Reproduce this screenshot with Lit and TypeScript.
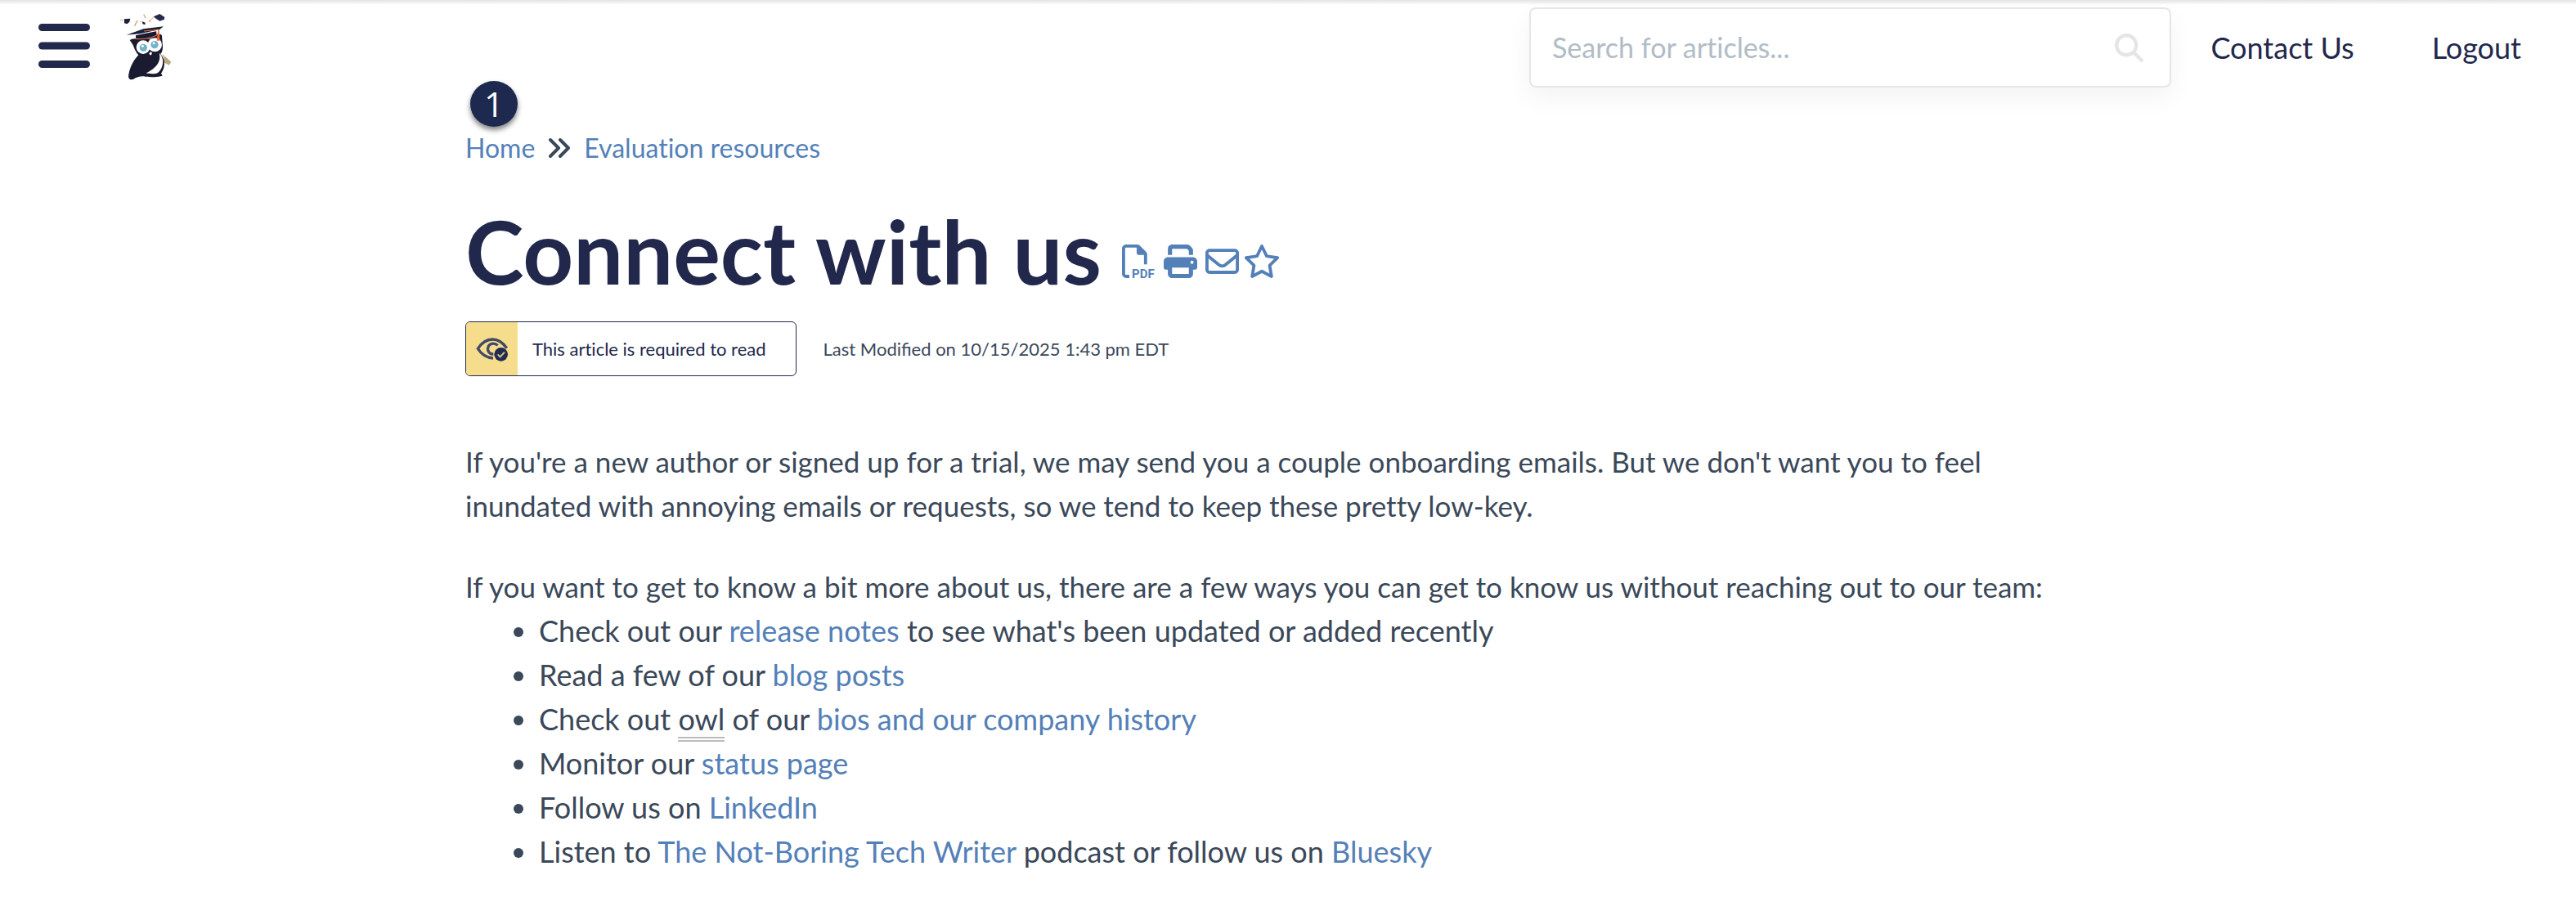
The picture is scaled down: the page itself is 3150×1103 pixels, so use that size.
import { LitElement, html, css, svg } from "lit";
import { customElement } from "lit/decorators.js";

const owl = html`
  <svg class="owl" viewBox="0 8 240 270" aria-hidden="true">
    <!-- tossed caps and scrolls -->
    <path d="M20 49h18" stroke="#ee9a78" stroke-width="2.5" />
    <path d="M36 45l22-2-3 12-9 8-10-3z" fill="#1c2038" />
    <path d="M84 50l-10 20" stroke="#c5b48c" stroke-width="5" />
    <path d="M107 28l8 14" stroke="#c5b48c" stroke-width="4" />
    <path d="M102 54l11 4-1 8-9-3z" fill="#1c2038" />
    <path d="M94 55h8" stroke="#ee9a78" stroke-width="2" />
    <path d="M143 36l23-10 18 12-2 9-16 5-14-9z" fill="#232a4a" />
    <path d="M145 36l-16 16" stroke="#f0845a" stroke-width="2.5" />
    <circle cx="129" cy="52" r="3" fill="#f0845a" />
    <!-- diploma under the wing -->
    <path d="M178 175l30 27-8 12-26-14z" fill="#b9a982" />
    <path d="M176 174l8 4-4 20-8-8z" fill="#ded3b3" />
    <!-- body -->
    <path d="M64 118c6 6 12 2 24 0h60l13-15c6-3 12-2 13 3l3 40c0 12-2 20-8 27 10 12 15 25 14 39-1 14-7 26-12 32l5 9c-24 6-52 6-68 2-15-1-28 4-38 10-14 6-21-2-18-17 5-28 18-52 36-71-15-18-21-38-24-59z" fill="#1a1a30" />
    <path d="M164 169c14 14 17 34 10 51-4 12-13 22-20 24-14 3-28 2-38-1 30-15 58-38 48-74z" fill="#fff" />
    <path d="M56 122l8-4 18-2 4 18-14 12z" fill="#1a1a30" />
    <circle cx="105" cy="148" r="25" fill="#fff" />
    <circle cx="148" cy="139" r="26" fill="#fff" />
    <circle cx="106" cy="150" r="14" fill="#73b3cc" />
    <circle cx="147" cy="139" r="14" fill="#73b3cc" />
    <circle cx="103" cy="144" r="4.5" fill="#fff" />
    <circle cx="144" cy="133" r="4.5" fill="#fff" />
    <path d="M127 171l5-6 6 4-3 8h-5z" fill="#fff" />
    <!-- mortarboard -->
    <path d="M78 105l82-17 2 24-60 9-24-2z" fill="#171b33" />
    <path d="M76 117c30 4 56-2 80-13" fill="none" stroke="#ef6a35" stroke-width="3.5" />
    <path d="M44 103l62-22 74-9-14 11-72 16z" fill="#1b203a" />
    <path d="M108 89l54-5" stroke="#ef6a35" stroke-width="3" />
    <path d="M153 86l7-2 1 12-6 8z" fill="#fff" />
    <path d="M160 84h4l2 40h-11z" fill="#ef6a35" />
  </svg>
`;

const eye = html`
  <svg class="eye" viewBox="0 0 120 90" aria-hidden="true">
    <path d="M113 41C98 20 80 9 61 9 38 9 19 24 7 43c12 19 30 33 56 35" fill="none" stroke="#434966" stroke-width="10" />
    <path d="M80 31C70 21 52 22 46 34c-7 15 2 30 18 29" fill="none" stroke="#434966" stroke-width="10" />
    <circle cx="92" cy="64" r="25" fill="#222a52" />
    <path d="M80 64l9 9 16-17" fill="none" stroke="#d8c584" stroke-width="6" />
  </svg>
`;

const filePdf = html`
  <svg class="icon" viewBox="0 0 41 41" aria-hidden="true">
    <g transform="scale(0.08)">
      <path d="M64 464l48 0 0 48-48 0c-35.3 0-64-28.7-64-64L0 64C0 28.7 28.7 0 64 0L229.5 0c17 0 33.3 6.7 45.3 18.7l90.5 90.5c12 12 18.7 28.3 18.7 45.3L384 304l-48 0 0-144-80 0c-17.7 0-32-14.3-32-32l0-80L64 48c-8.8 0-16 7.2-16 16l0 384c0 8.8 7.2 16 16 16z" />
    </g>
    <text class="pdf" x="12" y="41">PDF</text>
  </svg>
`;

const faIcon = (cls: string, w: number, d: string) => html`
  <svg class=${cls} viewBox="0 0 ${w} 512" aria-hidden="true">${svg`<path d=${d} />`}</svg>
`;

const PRINT =
  "M128 0C92.7 0 64 28.7 64 64v96h64V64H354.7L384 93.3V160h64V93.3c0-17-6.7-33.3-18.7-45.3L400 18.7C388 6.7 371.7 0 354.7 0H128zM384 352v32 64H128V384 368 352H384zm64 32h32c17.7 0 32-14.3 32-32V256c0-35.3-28.7-64-64-64H64c-35.3 0-64 28.7-64 64v96c0 17.7 14.3 32 32 32H64v64c0 35.3 28.7 64 64 64H384c35.3 0 64-28.7 64-64V384zM432 248a24 24 0 1 1 0 48 24 24 0 1 1 0-48z";
const MAIL =
  "M64 112c-8.8 0-16 7.2-16 16v22.1L220.5 291.7c20.7 17 50.4 17 71.1 0L464 150.1V128c0-8.8-7.2-16-16-16H64zM48 212.2V384c0 8.8 7.2 16 16 16H448c8.8 0 16-7.2 16-16V212.2L322 328.8c-38.4 31.5-93.7 31.5-132 0L48 212.2zM0 128C0 92.7 28.7 64 64 64H448c35.3 0 64 28.7 64 64V384c0 35.3-28.7 64-64 64H64c-35.3 0-64-28.7-64-64V128z";
const STAR =
  "M287.9 0c9.2 0 17.6 5.2 21.6 13.5l68.6 141.3 153.2 22.6c9 1.3 16.5 7.6 19.3 16.3s.5 18.1-5.9 24.5L433.6 328.4l26.2 155.6c1.5 9-2.2 18.1-9.7 23.5s-17.3 6-25.3 1.7l-137-73.2L151 509.1c-8.1 4.3-17.9 3.7-25.3-1.7s-11.2-14.5-9.7-23.5l26.2-155.6L31.1 218.2c-6.5-6.4-8.7-15.9-5.9-24.5s10.3-14.9 19.3-16.3l153.2-22.6L266.3 13.5C270.4 5.2 278.7 0 287.9 0zm0 79L235.4 187.2c-3.5 7.1-10.2 12.1-18.1 13.3L99 217.9 184.9 303c5.5 5.5 8.1 13.3 6.8 21L171.4 443.7l105.2-56.2c7.1-3.8 15.6-3.8 22.6 0l105.2 56.2L384.2 324.1c-1.3-7.7 1.2-15.5 6.8-21l85.9-85.1L358.6 200.5c-7.8-1.2-14.6-6.1-18.1-13.3L287.9 79z";
const SEARCH =
  "M416 208c0 45.9-14.9 88.3-40 122.7L502.6 457.4c12.5 12.5 12.5 32.8 0 45.3s-32.8 12.5-45.3 0L330.7 376c-34.4 25.2-76.8 40-122.7 40C93.1 416 0 322.9 0 208S93.1 0 208 0S416 93.1 416 208zM208 352a144 144 0 1 0 0-288 144 144 0 1 0 0 288z";

@customElement("app-root")
export class AppRoot extends LitElement {
  static styles = css`
    :host {
      display: block;
      min-height: 100vh;
      background: linear-gradient(#e3e3e3, #fff) top / 100% 6px no-repeat #fff;
      color: #3a4859;
      font-family: Lato, "Liberation Sans", sans-serif;
      font-size: 36px;
      line-height: 54px;
      font-variant-ligatures: no-common-ligatures;
    }
    * { box-sizing: border-box; }
    a { color: #5480b8; text-decoration: none; }
    button {
      border: 0;
      margin: 0;
      padding: 0;
      background: none;
      color: inherit;
      display: flex;
      cursor: pointer;
    }
    svg { display: block; flex: none; }
    .header {
      display: flex;
      align-items: center;
      justify-content: space-between;
      padding: 9px 67px 7px 47px;
    }
    .brand { display: flex; align-items: center; align-self: flex-start; gap: 30px; padding: 2px 0; }
    .bars { width: 63px; height: 72px; fill: #22284c; }
    .owl { width: 80px; height: 90px; }
    .tools { display: flex; align-items: center; flex: 0 1 1213px; }
    .search {
      flex: 1;
      display: flex;
      align-items: center;
      height: 98px;
      margin-right: 48px;
      padding: 0 32px 0 26px;
      border: 2px solid #e6e6e6;
      border-radius: 8px;
      background: #fff;
      box-shadow: 0 12px 32px rgba(0, 0, 0, 0.05);
    }
    .field {
      flex: 1;
      min-width: 0;
      border: 0;
      padding: 0;
      outline: 0;
      background: none;
      color: #3a4859;
      font: inherit;
      font-size: 34px;
      font-variant-ligatures: no-common-ligatures;
    }
    .field::placeholder { color: #b1bcc6; opacity: 1; }
    .glass { width: 35px; height: 35px; fill: #e5e5e5; }
    .nav { display: flex; gap: 95px; white-space: nowrap; }
    .nav a { color: #22284c; }
    .main {
      position: relative;
      max-width: 2012px;
      margin: 0 auto;
      padding: 47px 0 35px;
    }
    .marker {
      position: absolute;
      left: 6px;
      top: -15px;
      width: 58px;
      height: 56px;
      border-radius: 50%;
      background: #1d294f;
      color: #fff;
      font-family: "Open Sans", sans-serif;
      font-size: 42px;
      font-weight: 500;
      line-height: 56px;
      text-align: center;
      box-shadow: 0 4px 6px rgba(0, 0, 0, 0.5);
    }
    .crumbs {
      display: flex;
      align-items: center;
      gap: 17px;
      font-size: 32px;
      line-height: 40px;
    }
    .chevrons { width: 26px; height: 26px; fill: none; stroke: #3a4859; stroke-width: 4; stroke-linecap: round; stroke-linejoin: round; }
    .title-row { display: flex; align-items: flex-end; gap: 20px; margin-top: 51px; }
    .title { margin: 0; color: #22284c; font-size: 108px; line-height: 108px; font-weight: 700; }
    .actions { display: flex; padding-bottom: 20px; color: #5480b8; }
    .icon { width: 51px; height: 41px; padding: 0 5px; fill: currentColor; overflow: visible; }
    .star { width: 46px; height: 41px; fill: currentColor; }
    .pdf { font-family: "Liberation Sans Narrow", Roboto, sans-serif; font-size: 15px; line-height: 16px; font-weight: 700; }
    .meta { display: flex; align-items: center; gap: 33px; margin-top: 33px; font-size: 22px; line-height: 30px; }
    .required {
      display: flex;
      align-items: stretch;
      height: 67px;
      overflow: hidden;
      border: 1px solid #22284c;
      border-radius: 6px;
      color: #22284c;
    }
    .flag { display: flex; align-items: center; justify-content: center; width: 63px; background: #f6dd8c; }
    .eye { width: 40px; height: 30px; }
    .required-text { padding: 18px 36px 18px 18px; }
    .modified { font-variant-ligatures: normal; }
    .article { margin-top: 77px; }
    .article p { margin: 0 0 45px; font-size: 35px; }
    .article .lead { margin: 0; }
    .list { margin: 0; padding-left: 90px; }
    .term { border-bottom: 6px double #bbb; }
  `;

  render() {
    return html`
      <header class="header">
        <div class="brand">
          <button type="button" aria-label="Menu">
            <svg class="bars" viewBox="0 0 448 512" aria-hidden="true">
              <rect y="64" width="448" height="64" rx="32" />
              <rect y="224" width="448" height="64" rx="32" />
              <rect y="384" width="448" height="64" rx="32" />
            </svg>
          </button>
          <a href="#" aria-label="Knowledge base home">${owl}</a>
        </div>
        <div class="tools">
          <form class="search" role="search">
            <input class="field" type="text" aria-label="Search for articles" placeholder="Search for articles..." />
            <button type="button" aria-label="Search">${faIcon("glass", 512, SEARCH)}</button>
          </form>
          <nav class="nav">
            <a href="#">Contact Us</a>
            <a href="#">Logout</a>
          </nav>
        </div>
      </header>
      <main class="main">
        <span class="marker">1</span>
        <nav class="crumbs" aria-label="Breadcrumb">
          <a href="#">Home</a>
          <svg class="chevrons" viewBox="0 0 26 26" aria-hidden="true">
            <path d="M2 3l10 10-10 10M14 3l10 10-10 10" />
          </svg>
          <a href="#">Evaluation resources</a>
        </nav>
        <div class="title-row">
          <h1 class="title">Connect with us</h1>
          <div class="actions">
            <button type="button" aria-label="Download PDF">${filePdf}</button>
            <button type="button" aria-label="Print">${faIcon("icon", 512, PRINT)}</button>
            <button type="button" aria-label="Email">${faIcon("icon", 512, MAIL)}</button>
            <button type="button" aria-label="Add to favorites">${faIcon("star", 576, STAR)}</button>
          </div>
        </div>
        <div class="meta">
          <div class="required">
            <span class="flag">${eye}</span>
            <span class="required-text">This article is required to read</span>
          </div>
          <span class="modified">Last Modified on 10/15/2025 1:43 pm EDT</span>
        </div>
        <article class="article">
          <p>If you're a new author or signed up for a trial, we may send you a couple onboarding emails. But we don't want you to feel inundated with annoying emails or requests, so we tend to keep these pretty low-key.</p>
          <p class="lead">If you want to get to know a bit more about us, there are a few ways you can get to know us without reaching out to our team:</p>
          <ul class="list">
            <li>Check out our <a href="#">release notes</a> to see what's been updated or added recently</li>
            <li>Read a few of our <a href="#">blog posts</a></li>
            <li>Check out <span class="term">owl</span> of our <a href="#">bios and our company history</a></li>
            <li>Monitor our <a href="#">status page</a></li>
            <li>Follow us on <a href="#">LinkedIn</a></li>
            <li>Listen to <a href="#">The Not-Boring Tech Writer</a> podcast or follow us on <a href="#">Bluesky</a></li>
          </ul>
        </article>
      </main>
    `;
  }
}
